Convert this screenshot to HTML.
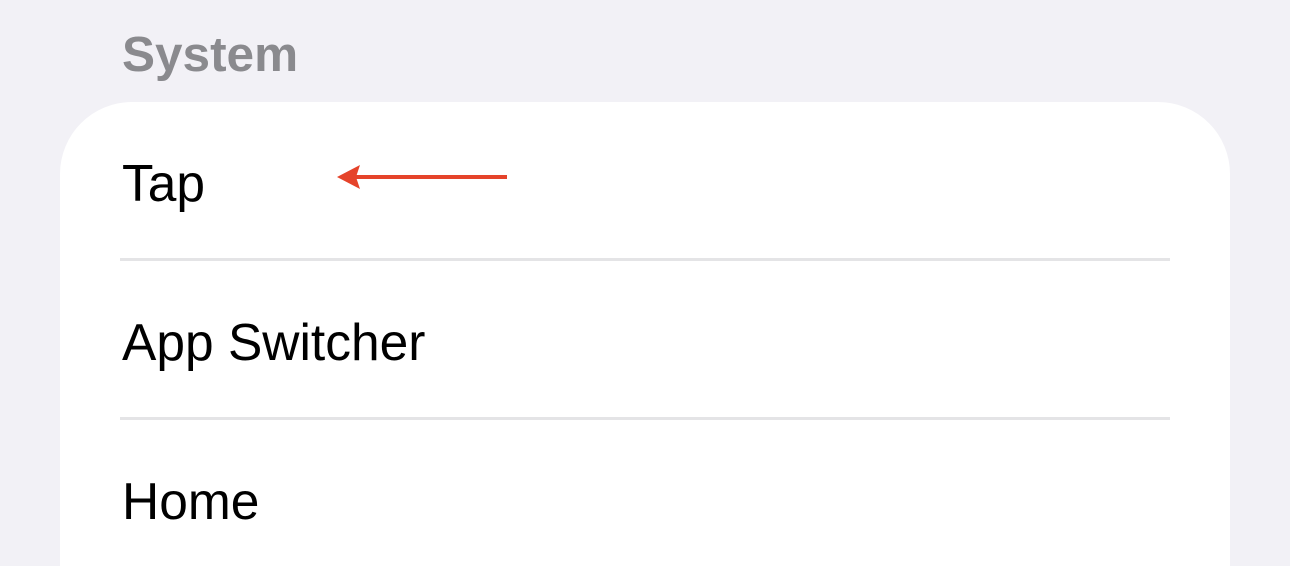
<!DOCTYPE html>
<html><head><style>
html,body{margin:0;padding:0;width:1290px;height:566px;overflow:hidden;}
body{background:#f2f1f6;position:relative;font-family:"Liberation Sans",Arial,sans-serif;}
.h{position:absolute;left:122px;top:25px;font-size:49.5px;font-weight:bold;color:#8a8a8e;line-height:60px;}
.card{position:absolute;left:60px;top:102px;width:1170px;height:464px;background:#fff;border-radius:72px 72px 0 0;}
.t{position:absolute;left:122px;font-size:51.5px;color:#000;line-height:60px;}
.sep{position:absolute;left:120px;width:1050px;height:3px;background:#e4e4e6;}
</style></head><body>
<div class="h">System</div>
<div class="card"></div>
<div class="t" style="top:153px">Tap</div>
<div class="sep" style="top:258px"></div>
<div class="t" style="top:312px">App Switcher</div>
<div class="sep" style="top:417px"></div>
<div class="t" style="top:471px">Home</div>
<svg style="position:absolute;left:0;top:0" width="1290" height="566">
<line x1="350" y1="177" x2="507" y2="177" stroke="#e5432a" stroke-width="4"/>
<polygon points="337,177 360,165 356,177 360,189" fill="#e5432a"/>
</svg>
</body></html>
